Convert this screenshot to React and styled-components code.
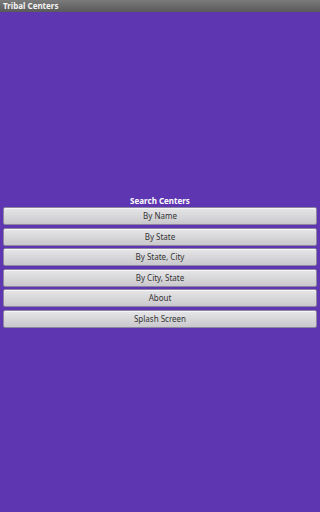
import styled, { createGlobalStyle } from "styled-components";

const GlobalStyle = createGlobalStyle`
  html, body {
    margin: 0;
    padding: 0;
    height: 100%;
    background: #5f36b1;
  }
  #root {
    height: 100%;
  }
`;

const Screen = styled.div`
  width: 100%;
  height: 512px;
  display: flex;
  flex-direction: column;
  background: #5f36b1;
  font-family: "Noto Sans", "Open Sans", sans-serif;
  overflow: hidden;
`;

const TitleBar = styled.div`
  height: 12px;
  flex-shrink: 0;
  display: flex;
  align-items: center;
  padding-left: 3px;
  background: linear-gradient(#7a7a7a, #5a5a5a);
  color: #f4f4f4;
  font-size: 8px;
  font-weight: 700;
  line-height: 1;
`;

const Content = styled.div`
  flex: 1;
  display: flex;
  flex-direction: column;
  justify-content: center;
  padding: 0 3px;
`;

const Heading = styled.div`
  text-align: center;
  color: #ffffff;
  font-size: 8px;
  font-weight: 700;
  line-height: 10px;
  margin-bottom: 1px;
`;

const ButtonList = styled.div`
  display: flex;
  flex-direction: column;
  gap: 2.6px;
`;

const MenuButton = styled.button`
  height: 18px;
  width: 100%;
  margin: 0;
  padding: 0;
  border: 1px solid #8e86a0;
  border-radius: 2px;
  background: linear-gradient(#e6e6e8, #c9c8cc);
  box-shadow: inset 0 1px 0 #f6f6f8;
  color: #333333;
  font-family: inherit;
  font-size: 8px;
  line-height: 1;
`;

const items = [
  "By Name",
  "By State",
  "By State, City",
  "By City, State",
  "About",
  "Splash Screen",
];

export default function App() {
  return (
    <>
      <GlobalStyle />
      <Screen>
        <TitleBar>Tribal Centers</TitleBar>
        <Content>
          <Heading>Search Centers</Heading>
          <ButtonList>
            {items.map((label) => (
              <MenuButton key={label}>{label}</MenuButton>
            ))}
          </ButtonList>
        </Content>
      </Screen>
    </>
  );
}
